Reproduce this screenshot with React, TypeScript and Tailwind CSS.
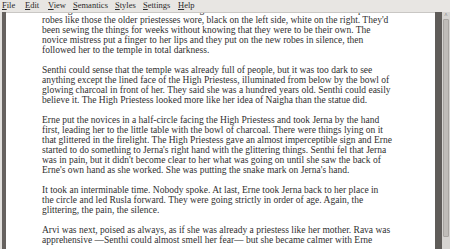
const menu = [
  { label: 'File', w: 'w-[23px]' },
  { label: 'Edit', w: 'w-[23px]' },
  { label: 'View', w: 'w-[25px]' },
  { label: 'Semantics', w: 'w-[42px]' },
  { label: 'Styles', w: 'w-[28px]' },
  { label: 'Settings', w: 'w-[35px]' },
  { label: 'Help', w: 'w-[24px]' },
];

const paragraphs = [
  [
    'wearing clean white shifts and then were given their own new white-and-black temple',
    'robes like those the older priestesses wore, black on the left side, white on the right. They\'d',
    'been sewing the things for weeks without knowing that they were to be their own. The',
    'novice mistress put a finger to her lips and they put on the new robes in silence, then',
    'followed her to the temple in total darkness.',
  ],
  [
    'Senthi could sense that the temple was already full of people, but it was too dark to see',
    'anything except the lined face of the High Priestess, illuminated from below by the bowl of',
    'glowing charcoal in front of her. They said she was a hundred years old. Senthi could easily',
    'believe it. The High Priestess looked more like her idea of Naigha than the statue did.',
  ],
  [
    'Erne put the novices in a half-circle facing the High Priestess and took Jerna by the hand',
    'first, leading her to the little table with the bowl of charcoal. There were things lying on it',
    'that glittered in the firelight. The High Priestess gave an almost imperceptible sign and Erne',
    'started to do something to Jerna\'s right hand with the glittering things. Senthi fel that Jerna',
    'was in pain, but it didn\'t become clear to her what was going on until she saw the back of',
    'Erne\'s own hand as she worked. She was putting the snake mark on Jerna\'s hand.',
  ],
  [
    'It took an interminable time. Nobody spoke. At last, Erne took Jerna back to her place in',
    'the circle and led Rusla forward. They were going strictly in order of age. Again, the',
    'glittering, the pain, the silence.',
  ],
  [
    'Arvi was next, poised as always, as if she was already a priestess like her mother. Rava was',
    'apprehensive —Senthi could almost smell her fear— but she became calmer with Erne',
  ],
];

export default function App() {
  return (
    <div className="w-[450px] h-[249px] overflow-hidden bg-[#e8e6e3] flex flex-col font-['Liberation_Serif',serif]">
      <div className="h-[12px] shrink-0 flex items-start pt-[1px] pl-[2px] text-[8.5px] leading-[9px] text-[#2a2a2a]">
        {menu.map((m) => (
          <span key={m.label} className={m.w}>
            <span className="underline decoration-[#2a2a2a] underline-offset-[1px]">{m.label[0]}</span>
            {m.label.slice(1)}
          </span>
        ))}
      </div>
      <div className="flex-1 flex min-h-0">
        <div className="w-[2px] bg-[#e3e1de]" />
        <div className="w-[4px] bg-[#66625f]" />
        <div className="flex-1 bg-white overflow-hidden pl-[36px] border-t border-[#c9c7c4] text-[9.5px] leading-[10px] text-[#2f2f2f]">
          <div className="-mt-[8px] flex flex-col gap-[10px]">
            {paragraphs.map((p, i) => (
              <div key={i}>
                {p.map((line, j) => (
                  <div key={j} className="h-[10px] whitespace-nowrap">
                    {line}
                  </div>
                ))}
              </div>
            ))}
          </div>
        </div>
        <div className="w-[7px] bg-[#5f5c59]" />
        <div className="w-[8px] bg-[#d6d4d1] flex flex-col items-center">
          <div className="h-[6px] text-[6px] leading-[6px] text-[#555]">^</div>
          <div className="mt-[1px] w-[6px] flex-1 mb-[12px] bg-[#bfbcb8] rounded-[1px] border border-[#a8a5a1]" />
        </div>
      </div>
    </div>
  );
}
